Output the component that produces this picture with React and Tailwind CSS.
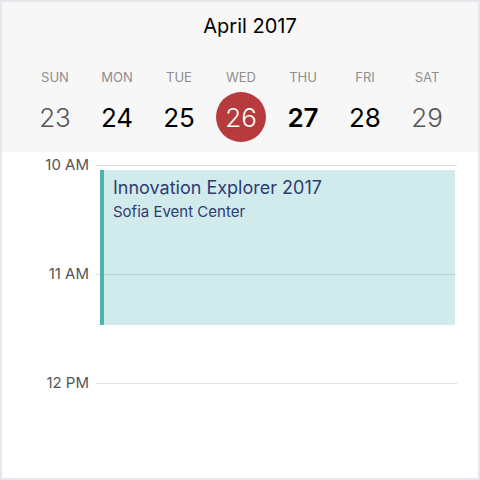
import React from "react";

const days = [
  { label: "SUN", num: "23", tone: "muted" },
  { label: "MON", num: "24", tone: "normal" },
  { label: "TUE", num: "25", tone: "normal" },
  { label: "WED", num: "26", tone: "selected" },
  { label: "THU", num: "27", tone: "today" },
  { label: "FRI", num: "28", tone: "normal" },
  { label: "SAT", num: "29", tone: "muted" },
];

const hours = ["10 AM", "11 AM", "12 PM"];

function DayNumber({ day }) {
  if (day.tone === "selected") {
    return (
      <div className="w-[50px] h-[50px] rounded-full bg-[#b73b3c] text-white font-light flex items-center justify-center">
        {day.num}
      </div>
    );
  }
  const cls =
    day.tone === "muted"
      ? "text-[#555555] font-light"
      : day.tone === "today"
      ? "text-black font-semibold"
      : "text-black font-normal";
  return <div className={`h-[50px] flex items-center justify-center ${cls}`}>{day.num}</div>;
}

export default function App() {
  return (
    <div className="w-[480px] h-[480px] border-2 border-[#e6e7ec] bg-white overflow-hidden font-['Inter','Liberation_Sans',sans-serif]">
      {/* Week header */}
      <header className="bg-[#f7f7f7] pt-[11px] pb-[10px]">
        <h1 className="text-center text-[20px] leading-[26px] text-black pl-[20px]">April 2017</h1>
        <div className="grid grid-cols-[repeat(7,62px)] pl-[22px] mt-[30px]">
          {days.map((d) => (
            <div key={d.label} className="text-center text-[13px] leading-[16px] text-[#8e8e8e]">
              {d.label}
            </div>
          ))}
        </div>
        <div className="grid grid-cols-[repeat(7,62px)] pl-[22px] mt-[7px] text-[26px]">
          {days.map((d) => (
            <div key={d.num} className="flex justify-center">
              <DayNumber day={d} />
            </div>
          ))}
        </div>
      </header>

      {/* Day timeline */}
      <main className="relative pt-[3px]">
        <div className="flex flex-col gap-[89px]">
          {hours.map((h) => (
            <div key={h} className="flex items-center h-[20px]">
              <span className="w-[87px] text-right text-[15px] text-[#555555]">{h}</span>
              <div className="flex-1 h-px bg-[#dedede] ml-[7px] mr-[21px]" />
            </div>
          ))}
        </div>

        <div className="absolute left-[98px] top-[18px] w-[355px] h-[155px] border-l-4 border-[#4db3af] bg-[rgba(88,184,186,0.28)] pl-[9px] pt-[6px]">
          <div className="text-[18px] leading-[23px] text-[#2e3b73]">Innovation Explorer 2017</div>
          <div className="text-[15px] leading-[19px] text-[#2e3b73] mt-[3px]">Sofia Event Center</div>
        </div>
      </main>
    </div>
  );
}
